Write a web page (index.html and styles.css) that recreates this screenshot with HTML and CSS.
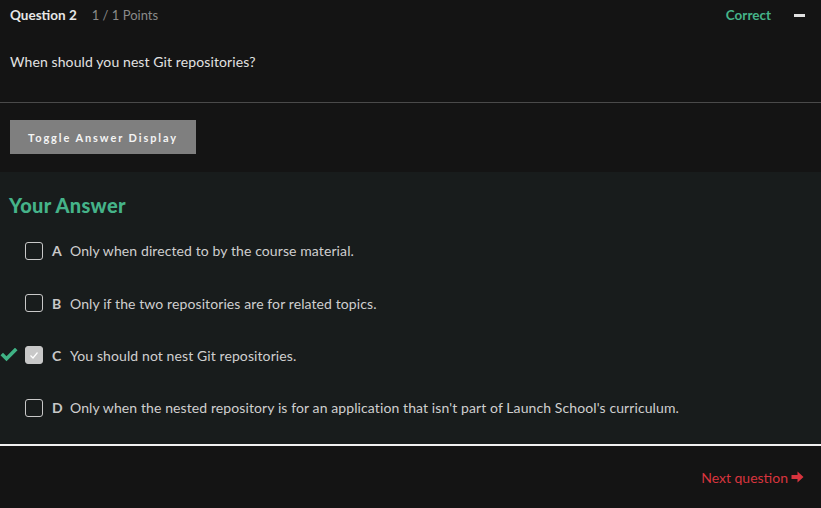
FILE: index.html
```html
<!DOCTYPE html>
<html>
<head>
<meta charset="utf-8">
<link rel="stylesheet" href="styles.css">
</head>
<body>
<div class="page">
  <header class="qhead">
    <div class="qtitle"><span class="qnum">Question 2</span><span class="qpoints">1 / 1 Points</span></div>
    <div class="qstatus"><span class="correct">Correct</span><span class="minus"></span></div>
  </header>
  <p class="qtext">When should you nest Git repositories?</p>
  <div class="toggle-wrap">
    <button class="toggle">Toggle Answer Display</button>
  </div>
  <section class="answers">
    <h2 class="ans-title">Your Answer</h2>
    <ul class="options">
      <li class="option"><span class="mark"></span><span class="box"></span><span class="letter">A</span><span class="otext">Only when directed to by the course material.</span></li>
      <li class="option"><span class="mark"></span><span class="box"></span><span class="letter">B</span><span class="otext">Only if the two repositories are for related topics.</span></li>
      <li class="option"><span class="mark"><svg viewBox="0 0 18 14" width="18" height="14"><path d="M0.5 7.2 L3 4.7 L6.5 8.2 L15 -0.3 L17.5 2.2 L6.5 13.2 Z" fill="#3fb385"/></svg></span><span class="box checked"><svg viewBox="0 0 18 18" width="18" height="18"><path d="M5.5 9.5 L8 12 L12.5 6.5" fill="none" stroke="#ffffff" stroke-width="1.2"/></svg></span><span class="letter">C</span><span class="otext">You should not nest Git repositories.</span></li>
      <li class="option"><span class="mark"></span><span class="box"></span><span class="letter">D</span><span class="otext">Only when the nested repository is for an application that isn't part of Launch School's curriculum.</span></li>
    </ul>
  </section>
  <footer class="foot">
    <a class="next" href="#">Next question <svg viewBox="0 0 13 12" width="13" height="12"><path d="M0.5 4 H6.5 V0.5 L12.5 6 L6.5 11.5 V8 H0.5 Z" fill="#d8343e"/></svg></a>
  </footer>
</div>
</body>
</html>
```

FILE: styles.css
```css
html, body {
  margin: 0;
  padding: 0;
  background: #141414;
}
body {
  font-family: "Lato", "Open Sans", sans-serif;
  color: #d8d8d8;
  width: 821px;
  height: 508px;
  overflow: hidden;
}
.page {
  display: flex;
  flex-direction: column;
}
.qhead {
  display: flex;
  justify-content: space-between;
  align-items: center;
  height: 30px;
  padding: 0 16px 0 10px;
}
.qtitle {
  display: flex;
  align-items: baseline;
  gap: 15px;
}
.qnum {
  font-weight: 700;
  font-size: 13.5px;
  color: #e6e6e6;
}
.qpoints {
  font-size: 13px;
  color: #8a8a8a;
}
.qstatus {
  display: flex;
  align-items: center;
  gap: 23px;
}
.correct {
  color: #45b389;
  font-weight: 700;
  font-size: 13.5px;
}
.minus {
  display: block;
  width: 11px;
  height: 3px;
  background: #e0e0e0;
}
.qtext {
  margin: 0;
  padding: 22px 10px 31px;
  font-size: 14px;
  color: #e2e2e2;
  border-bottom: 1px solid #4a4a4a;
  line-height: 19px;
  letter-spacing: 0.1px;
}
.toggle-wrap {
  padding: 17px 10px 18px;
}
.toggle {
  display: block;
  width: 186px;
  height: 34px;
  border: 0;
  background: #7f7f7f;
  color: #f4f4f4;
  font-family: "Lato", sans-serif;
  font-weight: 700;
  font-size: 11px;
  letter-spacing: 1.9px;
  padding: 0;
}
.answers {
  background: #181c1c;
  border-bottom: 2px solid #f0f0f0;
  padding: 20px 0 26px;
}
.ans-title {
  margin: 0 0 23px 9px;
  font-size: 20px;
  font-weight: 900;
  color: #45b389;
  line-height: 26px;
  letter-spacing: 0.3px;
}
.options {
  list-style: none;
  margin: 0;
  padding: 0;
  display: flex;
  flex-direction: column;
  gap: 33px;
}
.option {
  display: flex;
  align-items: center;
  height: 19.4px;
}
.mark {
  width: 25px;
  display: flex;
  align-items: center;
}
.box {
  width: 16px;
  height: 16px;
  border: 1.5px solid #c8c8c8;
  border-radius: 3px;
  margin-right: 9px;
  box-sizing: content-box;
  display: flex;
}
.box.checked {
  background: #c8c8c8;
  border-color: #c8c8c8;
}
.box.checked svg {
  margin: -1px;
}
.letter {
  font-weight: 700;
  font-size: 14px;
  color: #c8c8c8;
  width: 18px;
}
.otext {
  font-size: 14px;
  color: #cfcfcf;
  letter-spacing: 0.1px;
}
.foot {
  display: flex;
  justify-content: flex-end;
  padding: 23px 17px 0;
}
.next {
  color: #d8343e;
  text-decoration: none;
  font-size: 14px;
  display: flex;
  align-items: center;
  gap: 3px;
}
```
